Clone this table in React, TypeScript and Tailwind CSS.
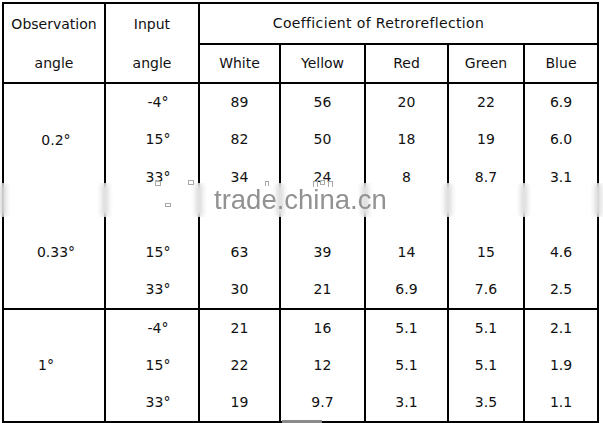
const GROUPS = [
  {
    obs: '0.2°',
    rows: [
      { input: '-4°', values: ['89', '56', '20', '22', '6.9'] },
      { input: '15°', values: ['82', '50', '18', '19', '6.0'] },
      { input: '33°', values: ['34', '24', '8', '8.7', '3.1'] },
    ],
  },
  {
    obs: '0.33°',
    rows: [
      // covered by the watermark band
      { input: '', values: ['', '', '', '', ''] },
      { input: '15°', values: ['63', '39', '14', '15', '4.6'] },
      { input: '33°', values: ['30', '21', '6.9', '7.6', '2.5'] },
    ],
  },
  {
    obs: '1°',
    rows: [
      { input: '-4°', values: ['21', '16', '5.1', '5.1', '2.1'] },
      { input: '15°', values: ['22', '12', '5.1', '5.1', '1.9'] },
      { input: '33°', values: ['19', '9.7', '3.1', '3.5', '1.1'] },
    ],
  },
];

const COLORS = ['White', 'Yellow', 'Red', 'Green', 'Blue'];
const ROW_H = ['h-[38px]', 'h-[37px]', 'h-[38px]'];

export default function App() {
  return (
    <div
      className="relative w-[603px] h-[423px] overflow-hidden bg-white text-[#111]"
      style={{ fontFamily: '"DejaVu Sans", Verdana, sans-serif' }}
    >
      <table className="ml-[2px] mt-[2px] w-[597px] table-fixed border-collapse text-[14px]">
        <colgroup>
          <col className="w-[102px]" />
          <col className="w-[94px]" />
          <col className="w-[81px]" />
          <col className="w-[85px]" />
          <col className="w-[83px]" />
          <col className="w-[76px]" />
          <col className="w-[74px]" />
        </colgroup>
        <thead>
          <tr className="h-[40px]">
            <th rowSpan={2} className="border-2 border-black p-0 font-normal align-top">
              <div className="h-[40px] flex items-center justify-center">Observation</div>
              <div className="h-[38px] flex items-center justify-center">angle</div>
            </th>
            <th rowSpan={2} className="border-2 border-black p-0 font-normal align-top">
              <div className="h-[40px] flex items-center justify-center">Input</div>
              <div className="h-[38px] flex items-center justify-center">angle</div>
            </th>
            <th colSpan={5} className="border-2 border-black p-0 pr-[40px] font-normal tracking-[0.35px]">
              Coefficient of Retroreflection
            </th>
          </tr>
          <tr className="h-[38px]">
            {COLORS.map((c) => (
              <th key={c} className="border-2 border-black p-0 font-normal">{c}</th>
            ))}
          </tr>
        </thead>
        <tbody>
          {GROUPS.map((g, gi) =>
            g.rows.map((r, ri) => {
              // the line between the first two groups sits under the watermark
              const hideBottom = gi === 0 && ri === 2;
              const hideTop = gi === 1 && ri === 0;
              const edge = hideBottom ? 'border-b-0' : hideTop ? 'border-t-0' : '';
              return (
                <tr key={`${gi}-${ri}`} className={ROW_H[ri]}>
                  {ri === 0 && (
                    <td
                      rowSpan={3}
                      className={`border-2 border-black p-0 text-center ${gi === 0 ? 'border-b-0' : gi === 1 ? 'border-t-0' : ''} ${gi === 2 ? 'pr-4' : 'pl-1'}`}
                    >
                      {g.obs}
                    </td>
                  )}
                  <td className={`border-x-2 border-black p-0 pl-3 text-center ${ri === 2 && !hideBottom ? 'border-b-2' : ''} ${edge}`}>
                    {r.input}
                  </td>
                  {r.values.map((v, vi) => (
                    <td
                      key={vi}
                      className={`border-x-2 border-black p-0 text-center ${ri === 2 && !hideBottom ? 'border-b-2' : ''} ${edge}`}
                    >
                      {v}
                    </td>
                  ))}
                </tr>
              );
            })
          )}
        </tbody>
      </table>

      {/* watermark band over the table */}
      <div className="absolute left-0 top-[183px] h-[34px] w-full backdrop-blur-[3px] bg-white/50">
        <div
          className="relative pl-[214px] text-[27.5px] leading-[34px] text-[#929292]"
          style={{ fontFamily: '"Liberation Sans", Arial, sans-serif' }}
        >
          trade.china.cn
          <span className="absolute left-[155px] -top-[2px] w-[6px] h-[5px] border border-[#aaa]" />
          <span className="absolute left-[188px] -top-[3px] w-[6px] h-[5px] border border-[#aaa]" />
          <span className="absolute left-[165px] top-[20px] w-[6px] h-[4px] border border-[#aaa]" />
          <span className="absolute left-[265px] -top-[2px] w-[4px] h-[5px] border border-b-0 border-[#aaa]" />
          <span className="absolute left-[313px] -top-[2px] w-[5px] h-[6px] border border-b-0 border-[#aaa]" />
          <span className="absolute left-[320px] -top-[3px] w-[5px] h-[5px] border border-[#aaa]" />
          <span className="absolute left-[328px] -top-[2px] w-[5px] h-[6px] border border-b-0 border-[#aaa]" />
        </div>
      </div>

      {/* stray bar at the bottom edge */}
      <div className="absolute left-[282px] top-[420px] w-[40px] h-[3px] bg-[#8a8a8a]" />
    </div>
  );
}
